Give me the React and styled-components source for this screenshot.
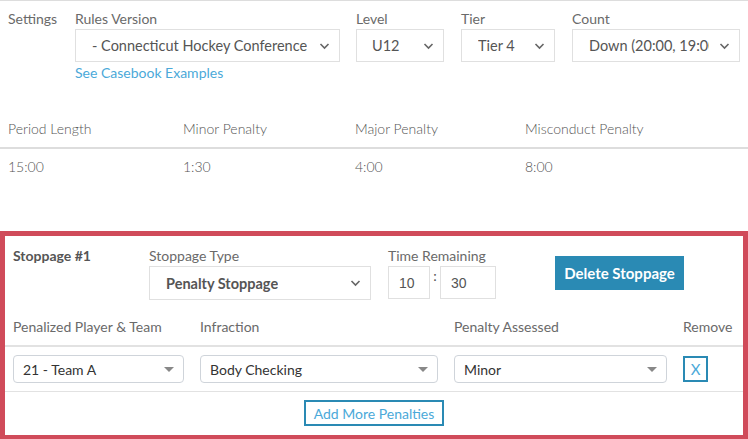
import styled, {createGlobalStyle} from 'styled-components'

const GlobalStyle = createGlobalStyle`
  html, body {
    margin: 0;
    padding: 0;
    background: #fff;
    font-family: Lato, "Open Sans", sans-serif;
    font-size: 14px;
    color: #666;
  }
  * { box-sizing: border-box; }
`

const Page = styled.div`
  width: 748px;
  border-top: 1px solid #ddd;
`

const SettingsBar = styled.div`
  display: flex;
  align-items: flex-start;
  padding: 8px 8px 0 8px;
`

const SettingsTitle = styled.div`
  width: 67px;
  line-height: 20px;
  color: #6a6a6a;
`

const Field = styled.div`
  display: flex;
  flex-direction: column;
  width: ${props => props.width}px;
  margin-right: ${props => props.gap || 0}px;
`

const Label = styled.div`
  line-height: 20px;
  color: #6a6a6a;
  white-space: nowrap;
`

const SelectBox = styled.div`
  position: relative;
  height: ${props => props.height || 33}px;
  border: 1px solid #e0e0e0;
  display: flex;
  align-items: center;
  padding-left: ${props => props.padLeft || 16}px;
  padding-right: 30px;
  font-size: 14.5px;
  font-weight: ${props => props.bold ? 700 : 400};
  color: #555;
`

const SelectText = styled.span`
  display: block;
  white-space: nowrap;
  overflow: hidden;
`

const Chevron = styled.svg`
  position: absolute;
  right: 9px;
  top: 50%;
  margin-top: -4px;
  width: 11px;
  height: 8px;
`

const CaseLink = styled.a`
  color: #4ba9d9;
  text-decoration: none;
  line-height: 20px;
  margin-top: 1px;
`

const PeriodTable = styled.table`
  width: 100%;
  border-collapse: collapse;
  margin-top: 29px;
  font-weight: 300;
  color: #555;
`

const Th = styled.th`
  text-align: left;
  font-weight: 300;
  padding: 7px 8px 8px;
  line-height: 20px;
  width: ${props => props.width}px;
  border-bottom: 2px solid #ddd;
`

const Td = styled.td`
  padding: 8px 8px;
  line-height: 20px;
`

const StoppageBox = styled.div`
  margin-top: 46px;
  border: 5px solid #d04b5a;
  border-bottom-width: 6px;
`

const StoppageTop = styled.div`
  display: flex;
  align-items: flex-start;
  padding: 10px 8px 0;
`

const StoppageTitle = styled.div`
  width: 136px;
  font-weight: 700;
  color: #555;
  line-height: 20px;
`

const TimeInputs = styled.div`
  display: flex;
  align-items: flex-start;
`

const TimeInput = styled.div`
  width: ${props => props.width}px;
  height: 33px;
  border: 1px solid #e0e0e0;
  display: flex;
  align-items: center;
  padding-left: 10px;
  font-family: "Liberation Sans", Arial, sans-serif;
  font-size: 14px;
  color: #555;
`

const Colon = styled.span`
  width: 10px;
  text-align: center;
  line-height: 20px;
  color: #555;
`

const DeleteButton = styled.button`
  margin: 10px 0 0 59px;
  height: 34px;
  width: 129px;
  border: none;
  background: #2a8ab4;
  color: #fff;
  font-family: inherit;
  font-size: 15px;
  font-weight: 700;
  padding: 0;
`

const PenaltyGrid = styled.div`
  margin-top: 17px;
`

const PenaltyRow = styled.div`
  display: grid;
  grid-template-columns: 171px 238px 213px 1fr;
  column-gap: 16px;
  align-items: center;
  padding: ${props => props.pad || '0 8px'};
  border-bottom: ${props => props.line || 'none'};
`

const SmallSelect = styled.div`
  position: relative;
  height: 28px;
  border: 1px solid #cfd4da;
  border-radius: 4px;
  display: flex;
  align-items: center;
  padding-left: 9px;
  color: #333;
  font-size: 14px;
`

const Caret = styled.span`
  position: absolute;
  right: 9px;
  top: 11px;
  width: 0;
  height: 0;
  border-left: 5px solid transparent;
  border-right: 5px solid transparent;
  border-top: 5px solid #888;
`

const RemoveButton = styled.button`
  width: 25px;
  height: 26px;
  border: 2px solid #2a8ab4;
  background: #fff;
  color: #4ba9d9;
  font-family: inherit;
  font-size: 15px;
  padding: 0;
  line-height: 20px;
`

const AddRow = styled.div`
  display: flex;
  justify-content: center;
  padding: 8px 0 9px;
`

const AddButton = styled.button`
  height: 26px;
  padding: 0 8px;
  border: 2px solid #2a8ab4;
  background: #fff;
  color: #4ba9d9;
  font-family: inherit;
  font-size: 14px;
`

const ChevronIcon = () => (
  <Chevron viewBox="0 0 11 8">
    <path d="M1.5 2 L5.5 6 L9.5 2" fill="none" stroke="#666" strokeWidth="1.6" />
  </Chevron>
)

const Select = ({children, ...props}) => (
  <SelectBox {...props}>
    <SelectText>{children}</SelectText>
    <ChevronIcon />
  </SelectBox>
)

const Dropdown = ({children}) => (
  <SmallSelect>
    {children}
    <Caret />
  </SmallSelect>
)

const periodData = [
  ['Period Length', '15:00', 175],
  ['Minor Penalty', '1:30', 172],
  ['Major Penalty', '4:00', 170],
  ['Misconduct Penalty', '8:00', null],
]

const App = () => (
  <Page>
    <GlobalStyle />
    <SettingsBar>
      <SettingsTitle>Settings</SettingsTitle>
      <Field width={265} gap={16}>
        <Label>Rules Version</Label>
        <Select>- Connecticut Hockey Conference</Select>
        <CaseLink href="#">See Casebook Examples</CaseLink>
      </Field>
      <Field width={88} gap={17}>
        <Label>Level</Label>
        <Select padLeft={15}>U12</Select>
      </Field>
      <Field width={94} gap={17}>
        <Label>Tier</Label>
        <Select padLeft={16}>Tier 4</Select>
      </Field>
      <Field width={168}>
        <Label>Count</Label>
        <Select padLeft={16}>Down (20:00, 19:00, ...)</Select>
      </Field>
    </SettingsBar>

    <PeriodTable>
      <thead>
        <tr>
          {periodData.map(([h, , w]) => <Th key={h} width={w}>{h}</Th>)}
        </tr>
      </thead>
      <tbody>
        <tr>
          {periodData.map(([h, v]) => <Td key={h}>{v}</Td>)}
        </tr>
      </tbody>
    </PeriodTable>

    <StoppageBox>
      <StoppageTop>
        <StoppageTitle>Stoppage #1</StoppageTitle>
        <Field width={222} gap={17}>
          <Label>Stoppage Type</Label>
          <Select height={34} bold padLeft={16}>Penalty Stoppage</Select>
        </Field>
        <Field width={108}>
          <Label>Time Remaining</Label>
          <TimeInputs>
            <TimeInput width={42}>10</TimeInput>
            <Colon>:</Colon>
            <TimeInput width={56}>30</TimeInput>
          </TimeInputs>
        </Field>
        <DeleteButton>Delete Stoppage</DeleteButton>
      </StoppageTop>

      <PenaltyGrid>
        <PenaltyRow pad="0 8px 8px" line="2px solid #e2e2e2">
          <Label>Penalized Player &amp; Team</Label>
          <Label>Infraction</Label>
          <Label>Penalty Assessed</Label>
          <Label>Remove</Label>
        </PenaltyRow>
        <PenaltyRow pad="8px 8px 8px" line="1px solid #e2e2e2">
          <Dropdown>21 - Team A</Dropdown>
          <Dropdown>Body Checking</Dropdown>
          <Dropdown>Minor</Dropdown>
          <div><RemoveButton>X</RemoveButton></div>
        </PenaltyRow>
      </PenaltyGrid>
      <AddRow>
        <AddButton>Add More Penalties</AddButton>
      </AddRow>
    </StoppageBox>
  </Page>
)

export default App
